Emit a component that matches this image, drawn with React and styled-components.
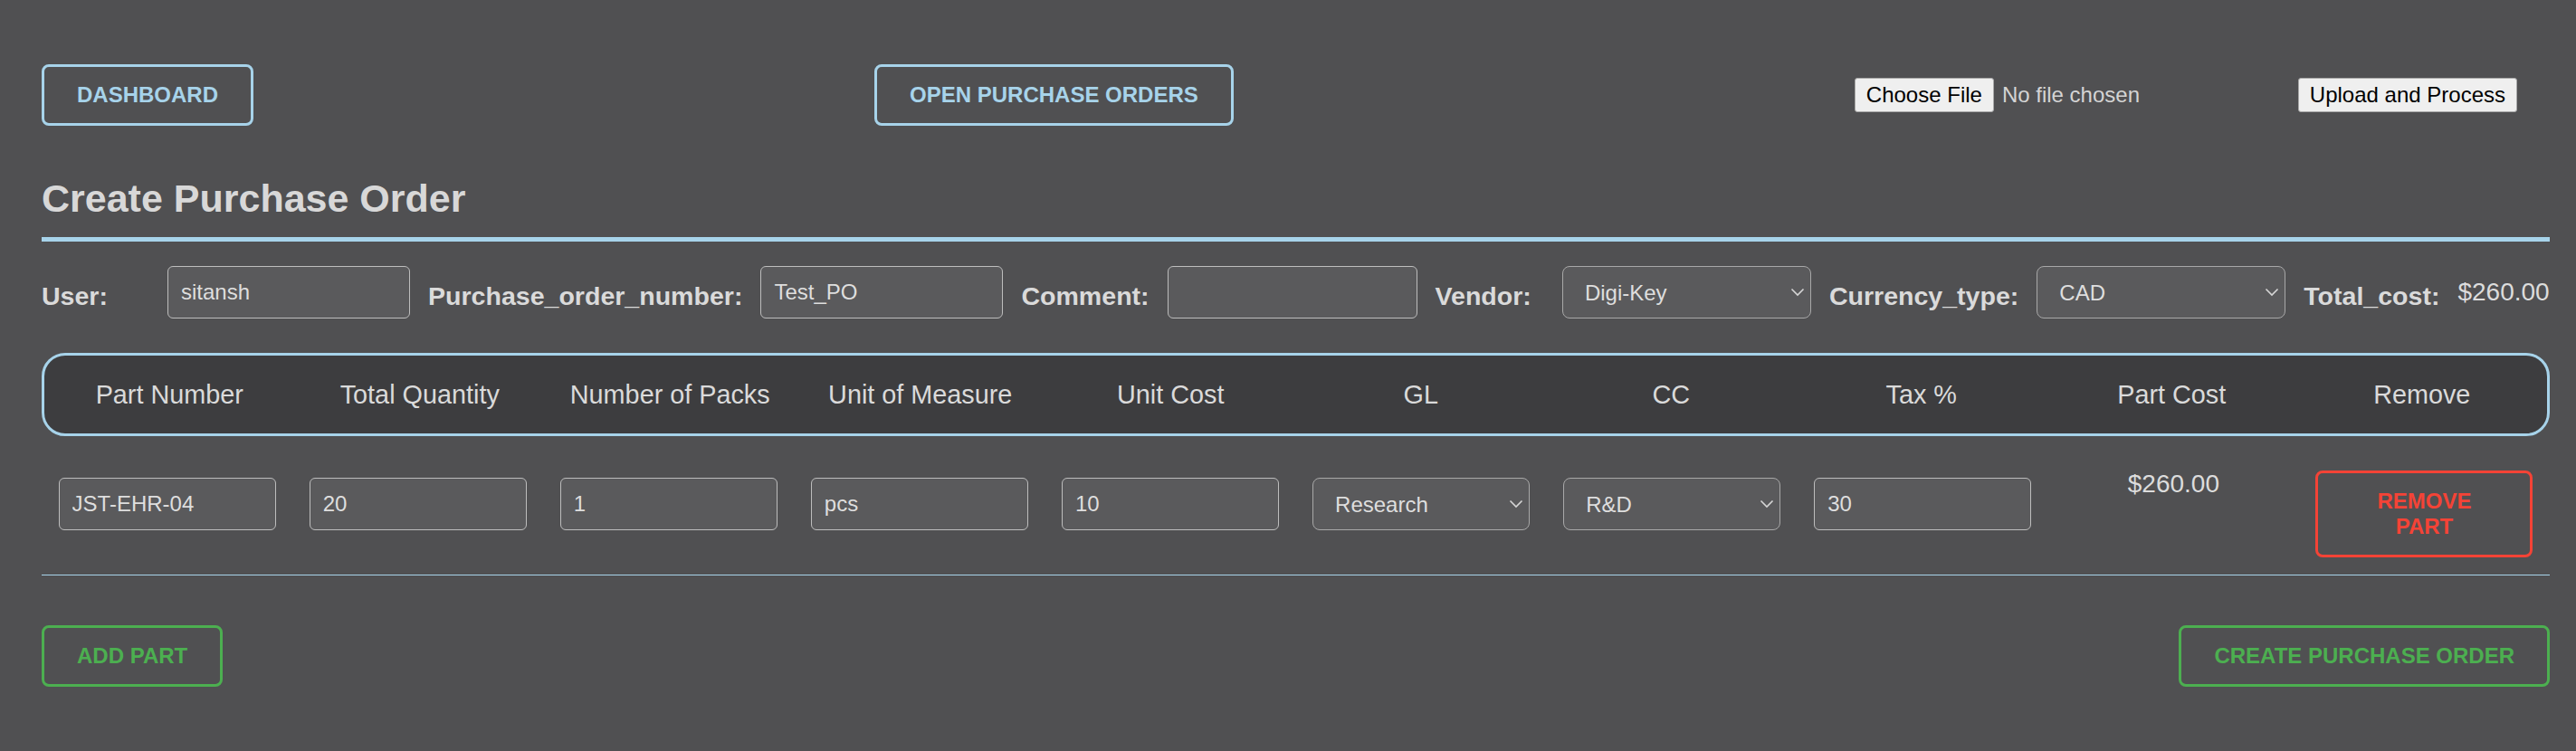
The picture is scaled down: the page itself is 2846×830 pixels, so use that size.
import React from "react";
import styled, { createGlobalStyle } from "styled-components";

const GlobalStyle = createGlobalStyle`
  html, body {
    margin: 0;
    padding: 0;
    background: #505052;
  }
  body {
    font-family: "Liberation Sans", Arial, sans-serif;
    color: #d9d9d9;
  }
  * { box-sizing: border-box; }
`;

const BLUE = "#a7d3ea";
const GREEN = "#4caf50";
const RED = "#f44336";

const Page = styled.div`
  min-height: 830px;
  padding: 71px 29px 0 46px;
  background: #505052;
`;

const TopBar = styled.div`
  display: flex;
  justify-content: space-between;
  align-items: center;
  height: 68px;
`;

const OutlineButton = styled.button`
  font-family: "Liberation Sans", Arial, sans-serif;
  font-size: 24px;
  font-weight: 700;
  line-height: normal;
  text-transform: uppercase;
  background: transparent;
  color: ${(p) => p.$color};
  border: 3px solid ${(p) => p.$color};
  border-radius: 8px;
  padding: 17px 36px;
  cursor: pointer;
  width: ${(p) => (p.$width ? `${p.$width}px` : "auto")};
`;

const UploadGroup = styled.form`
  display: flex;
  align-items: center;
  gap: 34px;
  padding-right: 36px;
`;

const FileInput = styled.input`
  width: 456px;
  font-family: "Liberation Sans", Arial, sans-serif;
  font-size: 24px;
  color: #d4d4d4;

  &::file-selector-button {
    font-family: "Liberation Sans", Arial, sans-serif;
    font-size: 24px;
    color: #000;
    background: #efefef;
    border: 1px solid #a9a9a9;
    border-radius: 3px;
    padding: 4px 12px;
    margin-right: 9px;
    line-height: normal;
  }
`;

const PlainButton = styled.button`
  font-family: "Liberation Sans", Arial, sans-serif;
  font-size: 24px;
  line-height: normal;
  color: #000;
  background: #efefef;
  border: 1px solid #a9a9a9;
  border-radius: 3px;
  padding: 4px 12px;
`;

const Title = styled.h2`
  margin: 56px 0 0;
  font-size: 43px;
  font-weight: 700;
  line-height: normal;
  color: #d8d8d8;
  padding-bottom: 18px;
  border-bottom: 5px solid ${BLUE};
`;

const FormRow = styled.div`
  display: flex;
  align-items: center;
  gap: 20px;
  margin-top: 27px;
  height: 58px;
`;

const Label = styled.label`
  font-size: 28.55px;
  font-weight: 700;
  line-height: normal;
  padding-top: 8px;
  color: #dadada;
  white-space: nowrap;
  margin-right: ${(p) => p.$extra || 0}px;
`;

const TextField = styled.input`
  width: ${(p) => p.$width || 240}px;
  height: 58px;
  flex: none;
  font-family: "Liberation Sans", Arial, sans-serif;
  font-size: 24px;
  color: #dedede;
  background: #5a5a5c;
  border: 1px solid #bdbdbd;
  border-radius: 6px;
  padding: 0 14px;
  margin-top: ${(p) => p.$top || 0}px;
  outline: none;
`;

const SelectWrap = styled.div`
  position: relative;
  width: ${(p) => p.$width || 240}px;
  height: 58px;
  flex: none;
  margin-top: ${(p) => p.$top || 0}px;
`;

const Select = styled.select`
  appearance: none;
  -webkit-appearance: none;
  width: 100%;
  height: 100%;
  font-family: "Liberation Sans", Arial, sans-serif;
  font-size: 24px;
  color: #dedede;
  background: #5a5a5c;
  border: 1px solid #a8a8a8;
  border-radius: 8px;
  padding: 0 30px 0 24px;
  outline: none;
`;

const Chevron = styled.svg`
  position: absolute;
  right: 7px;
  top: 50%;
  transform: translateY(-50%);
  pointer-events: none;
`;

const Amount = styled.span`
  font-size: 28px;
  line-height: normal;
  color: #dcdcdc;
  white-space: nowrap;
  margin-top: ${(p) => p.$top || 0}px;
`;

const TableHeader = styled.div`
  display: grid;
  grid-template-columns: repeat(10, 1fr);
  margin-top: 38px;
  background: #3d3d3f;
  border: 3px solid ${BLUE};
  border-radius: 26px;
  padding: 26.5px 0;
`;

const HeaderCell = styled.div`
  text-align: center;
  font-size: 28.8px;
  line-height: normal;
  color: #dadada;
  white-space: nowrap;
`;

const PartRow = styled.div`
  display: grid;
  grid-template-columns: repeat(10, 1fr);
  justify-items: center;
  align-items: start;
  padding: 38px 0 19px;
  border-bottom: 1px solid ${BLUE};
`;

const BottomBar = styled.div`
  display: flex;
  justify-content: space-between;
  align-items: center;
  margin-top: 55px;
`;

function Dropdown({ width, top, value, options }) {
  return (
    <SelectWrap $width={width} $top={top}>
      <Select defaultValue={value}>
        {options.map((o) => (
          <option key={o}>{o}</option>
        ))}
      </Select>
      <Chevron width="16" height="10" viewBox="0 0 16 10">
        <path d="M1.5 1.5 L8 8 L14.5 1.5" fill="none" stroke="#d6d6d6" strokeWidth="1.6" />
      </Chevron>
    </SelectWrap>
  );
}

const headers = [
  "Part Number",
  "Total Quantity",
  "Number of Packs",
  "Unit of Measure",
  "Unit Cost",
  "GL",
  "CC",
  "Tax %",
  "Part Cost",
  "Remove",
];

export default function App() {
  return (
    <>
      <GlobalStyle />
      <Page>
        <TopBar>
          <OutlineButton $color={BLUE}>Dashboard</OutlineButton>
          <OutlineButton $color={BLUE}>Open Purchase Orders</OutlineButton>
          <UploadGroup onSubmit={(e) => e.preventDefault()}>
            <FileInput type="file" />
            <PlainButton type="button">Upload and Process</PlainButton>
          </UploadGroup>
        </TopBar>

        <Title>Create Purchase Order</Title>

        <FormRow>
          <Label $extra={46}>User:</Label>
          <TextField $width={268} defaultValue="sitansh" />
          <Label>Purchase_order_number:</Label>
          <TextField $width={268} defaultValue="Test_PO" />
          <Label>Comment:</Label>
          <TextField $width={276} defaultValue="" />
          <Label $extra={14}>Vendor:</Label>
          <Dropdown width={275} value="Digi-Key" options={["Digi-Key", "Mouser", "Arrow"]} />
          <Label>Currency_type:</Label>
          <Dropdown width={275} value="CAD" options={["CAD", "USD", "EUR"]} />
          <Label>Total_cost:</Label>
          <Amount>$260.00</Amount>
        </FormRow>

        <TableHeader>
          {headers.map((h) => (
            <HeaderCell key={h}>{h}</HeaderCell>
          ))}
        </TableHeader>

        <PartRow>
          <TextField $top={8} defaultValue="JST-EHR-04" />
          <TextField $top={8} defaultValue="20" />
          <TextField $top={8} defaultValue="1" />
          <TextField $top={8} defaultValue="pcs" />
          <TextField $top={8} defaultValue="10" />
          <Dropdown top={8} value="Research" options={["Research", "Operations", "Sales"]} />
          <Dropdown top={8} value="R&D" options={["R&D", "Admin", "Production"]} />
          <TextField $top={8} defaultValue="30" />
          <Amount $top={-1}>$260.00</Amount>
          <OutlineButton $color={RED} $width={240}>Remove Part</OutlineButton>
        </PartRow>

        <BottomBar>
          <OutlineButton $color={GREEN}>Add Part</OutlineButton>
          <OutlineButton $color={GREEN}>Create Purchase Order</OutlineButton>
        </BottomBar>
      </Page>
    </>
  );
}
